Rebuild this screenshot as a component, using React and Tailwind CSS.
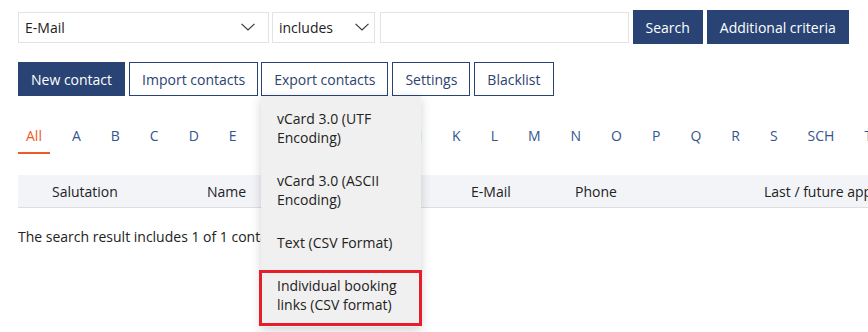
import React from "react";

const Chevron = () => (
  <svg width="14" height="8" viewBox="0 0 14 8" fill="none" className="shrink-0">
    <path d="M0.5 0.8 L7 7 L13.5 0.8" stroke="#333" strokeWidth="1.1" />
  </svg>
);

const letters = ["A","B","C","D","E","F","G","H","I","J","K","L","M","N","O","P","Q","R","S","SCH","T","U","V","W","X","Y","Z"];

export default function App() {
  return (
    <div
      className="relative w-[868px] h-[332px] overflow-hidden bg-white text-[14px] text-[#222]"
      style={{ fontFamily: "'Open Sans', 'Liberation Sans', sans-serif" }}
    >
      <div className="pl-[18px] pt-[10px] w-[1100px]">
        {/* Search row */}
        <div className="flex items-center h-[34px]">
          <div className="flex items-center justify-between w-[250.5px] h-[31px] border border-[#e3e3e3] pl-[6px] pr-[13px]">
            <span>E-Mail</span>
            <Chevron />
          </div>
          <div className="ml-[3.5px] flex items-center justify-between w-[103px] h-[31px] border border-[#e3e3e3] pl-[6px] pr-[5px]">
            <span>includes</span>
            <Chevron />
          </div>
          <div className="ml-[4.5px] w-[249.5px] h-[31px] border border-[#e3e3e3]" />
          <button className="ml-[3.5px] h-[34px] px-[13px] bg-[#294374] text-white">Search</button>
          <button className="ml-[4px] h-[34px] px-[13px] bg-[#294374] text-white">Additional criteria</button>
        </div>

        {/* Action buttons */}
        <div className="flex items-center gap-[4px] mt-[18px] h-[34px]">
          <button className="h-[34px] px-3 border border-[#294374] bg-[#294374] text-white">New contact</button>
          <button className="h-[34px] px-3 border border-[#294374] text-[#2c4270]">Import contacts</button>
          <button className="h-[34px] px-3 border border-[#294374] text-[#2c4270] -ml-[1px]">Export contacts</button>
          <button className="h-[34px] px-3 border border-[#294374] text-[#2c4270]">Settings</button>
          <button className="h-[34px] px-3 border border-[#294374] text-[#2c4270]">Blacklist</button>
        </div>

        {/* Alphabet tabs */}
        <div className="flex items-start gap-[14px] mt-[30px]">
          <div className="px-2 leading-5 pb-[6px] border-b-2 border-[#f05a28] text-[#f05a28]">All</div>
          {letters.map((l) => (
            <div key={l} className="px-2 leading-5 pb-[6px] border-b-2 border-transparent text-[#34558f]">
              {l}
            </div>
          ))}
        </div>

        {/* Table header */}
        <div className="mt-[21px] flex items-center h-[33px] bg-[#f3f4f8] border-b border-[#dedede] whitespace-nowrap">
          <div className="w-[34px] shrink-0" />
          <div className="w-[155px] shrink-0">Salutation</div>
          <div className="w-[264px] shrink-0">Name</div>
          <div className="w-[104px] shrink-0">E-Mail</div>
          <div className="w-[189px] shrink-0">Phone</div>
          <div className="shrink-0">Last / future appointment</div>
        </div>

        <div className="mt-[19px] leading-5">The search result includes 1 of 1 contacts.</div>
      </div>

      {/* Export dropdown */}
      <div className="absolute left-[261px] top-[96px] w-[160px] bg-[#f0f0f0] shadow-[0_3px_10px_rgba(0,0,0,0.18)] pt-[0.5px] pb-[1px] leading-[19px]">
        <div className="px-4 py-3">vCard 3.0 (UTF Encoding)</div>
        <div className="px-4 py-3">vCard 3.0 (ASCII Encoding)</div>
        <div className="px-4 py-3">Text (CSV Format)</div>
        <div className="relative px-4 py-3">
          Individual booking links (CSV format)
          <div className="absolute left-[-2px] right-[-1px] top-[6.5px] bottom-[-0.5px] border-[3px] border-[#e41e2b] pointer-events-none" />
        </div>
      </div>
    </div>
  );
}
